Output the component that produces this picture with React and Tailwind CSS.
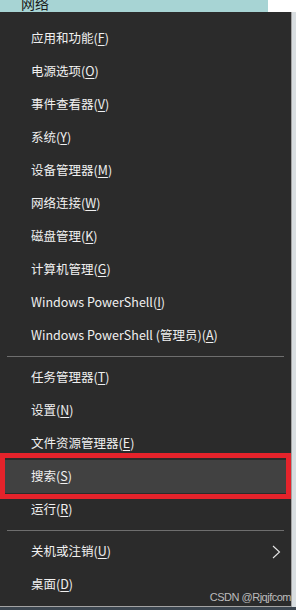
const groups = [
  [
    ["应用和功能", "F"],
    ["电源选项", "O"],
    ["事件查看器", "V"],
    ["系统", "Y"],
    ["设备管理器", "M"],
    ["网络连接", "W"],
    ["磁盘管理", "K"],
    ["计算机管理", "G"],
    ["Windows PowerShell", "I"],
    ["Windows PowerShell (管理员)", "A"],
  ],
  [
    ["任务管理器", "T"],
    ["设置", "N"],
    ["文件资源管理器", "E"],
    ["搜索", "S", true],
    ["运行", "R"],
  ],
  [
    ["关机或注销", "U", false, true],
    ["桌面", "D"],
  ],
]

function MenuItem({ label, hotkey, active, submenu }) {
  return (
    <div className={`relative flex h-[33px] items-center pl-[31px] pr-3 ${active ? "bg-[#414141]" : ""}`}>
      <span className="whitespace-nowrap">
        {label}(<span className="underline underline-offset-2">{hotkey}</span>)
      </span>
      {submenu && (
        <svg className="absolute right-[10px] top-1/2 -translate-y-1/2" width="9" height="14" viewBox="0 0 9 14">
          <path d="M1 1l6.5 6L1 13" fill="none" stroke="#e6e6e6" strokeWidth="1.1" />
        </svg>
      )}
      {active && (
        <div className="pointer-events-none absolute -top-[7px] -bottom-[6px] left-0 right-0 border-[5px] border-[#e5232b]" />
      )}
    </div>
  )
}

export default function App() {
  return (
    <div className="h-[610px] w-[296px] overflow-hidden bg-[#3c4650] text-[12.5px] text-[#f0f0f0]" style={{ fontFamily: '"Noto Sans CJK SC", "Noto Sans", sans-serif' }}>
      <div className="flex h-[12px]">
        <div className="w-[268px] overflow-hidden bg-[#a7d4d4]">
          <div className="-mt-[6px] pl-[21px] text-[14px] leading-[18px] text-[#1a1a1a]">网络</div>
        </div>
        <div className="flex-1 bg-white" />
      </div>
      <div className="flex">
        <div className="relative w-[292px] border-r border-b border-[#a3a3a3] bg-[#2b2b2b] pt-[10px] pb-[5px]">
          {groups.map((items, gi) => (
            <div key={gi}>
              {gi > 0 && (
                <div className="flex h-[9px] items-center px-[7px]">
                  <div className="h-px w-full bg-[#6e6e6e]" />
                </div>
              )}
              {items.map(([label, hotkey, active, submenu]) => (
                <MenuItem key={label} label={label} hotkey={hotkey} active={active} submenu={submenu} />
              ))}
            </div>
          ))}
          <div className="absolute bottom-[2px] right-0 text-[11px] leading-[14px] tracking-[-0.5px] text-[#bcbcbc]" style={{ fontFamily: '"Liberation Sans", Arial, sans-serif' }}>
            CSDN @Rjqjfcom
          </div>
        </div>
        <div className="flex-1 bg-[#d8dde0]" />
      </div>
    </div>
  )
}
